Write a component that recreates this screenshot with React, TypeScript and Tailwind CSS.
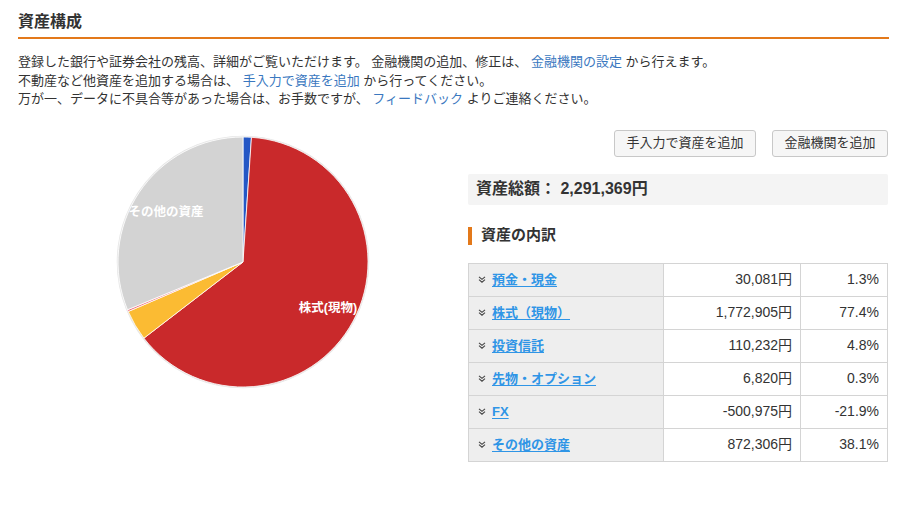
import React from "react";

const FONT = { fontFamily: '"Liberation Sans", "Noto Sans CJK JP", sans-serif' };

const slices = [
  { v: 30081, c: "#2457c5" },
  { v: 1772905, c: "#c9292b" },
  { v: 110232, c: "#fbbb33" },
  { v: 6820, c: "#ef6f7a" },
  { v: 872306, c: "#d3d3d3" },
];

function Pie() {
  const cx = 225;
  const cy = 132;
  const r = 125;
  const total = slices.reduce((s, x) => s + x.v, 0);
  let a = 0;
  const paths = slices.map((s, i) => {
    const start = a;
    const end = a + (s.v / total) * Math.PI * 2;
    a = end;
    const x1 = cx + r * Math.sin(start);
    const y1 = cy - r * Math.cos(start);
    const x2 = cx + r * Math.sin(end);
    const y2 = cy - r * Math.cos(end);
    const large = end - start > Math.PI ? 1 : 0;
    return (
      <path
        key={i}
        d={`M${cx},${cy} L${x1},${y1} A${r},${r} 0 ${large} 1 ${x2},${y2} Z`}
        fill={s.c}
        stroke="#ffffff"
        strokeWidth={0.8}
      />
    );
  });
  return (
    <svg width="450" height="300" viewBox="0 0 450 300">
      <circle cx={cx} cy={cy} r={r + 0.5} fill="none" stroke="#e6e6e6" strokeWidth={1.5} />
      {paths}
      <text x="148" y="86" fill="#ffffff" fontSize="12.5" fontWeight="bold" textAnchor="middle" style={FONT}>
        その他の資産
      </text>
      <text x="310" y="182" fill="#ffffff" fontSize="12.5" fontWeight="bold" textAnchor="middle" style={FONT}>
        株式(現物)
      </text>
    </svg>
  );
}

function Chevron() {
  return (
    <svg width="8" height="7" viewBox="0 0 8 7" className="shrink-0">
      <path d="M1 0.8 L4 3.3 L7 0.8 M1 3.7 L4 6.2 L7 3.7" fill="none" stroke="#444" strokeWidth="1.1" />
    </svg>
  );
}

const rows = [
  ["預金・現金", "30,081円", "1.3%"],
  ["株式（現物）", "1,772,905円", "77.4%"],
  ["投資信託", "110,232円", "4.8%"],
  ["先物・オプション", "6,820円", "0.3%"],
  ["FX", "-500,975円", "-21.9%"],
  ["その他の資産", "872,306円", "38.1%"],
];

export default function App() {
  return (
    <div className="w-[907px] h-[514px] bg-white px-[18px] pt-[11px] text-[#333]" style={FONT}>
      <h2 className="text-[16px] font-bold leading-[22px] pb-[4px] border-b-2 border-[#e3791a]">資産構成</h2>
      <div className="mt-[14px] text-[13px] leading-[18.5px]">
        <p>
          登録した銀行や証券会社の残高、詳細がご覧いただけます。 金融機関の追加、修正は、{" "}
          <span className="text-[#3a78c0]">金融機関の設定</span> から行えます。
        </p>
        <p>
          不動産など他資産を追加する場合は、 <span className="text-[#3a78c0]">手入力で資産を追加</span> から行ってください。
        </p>
        <p>
          万が一、データに不具合等があった場合は、お手数ですが、 <span className="text-[#3a78c0]">フィードバック</span>{" "}
          よりご連絡ください。
        </p>
      </div>
      <div className="mt-[21px] flex">
        <div className="w-[450px] shrink-0">
          <Pie />
        </div>
        <div className="w-[420px]">
          <div className="flex justify-end gap-[16px]">
            <button className="w-[142px] h-[27px] rounded-[3px] border border-[#c8c8c8] bg-[#f6f6f6] text-[13px] text-[#333]">
              手入力で資産を追加
            </button>
            <button className="w-[116px] h-[27px] rounded-[3px] border border-[#c8c8c8] bg-[#f6f6f6] text-[13px] text-[#333]">
              金融機関を追加
            </button>
          </div>
          <div className="mt-[17px] h-[31px] rounded-[2px] bg-[#f4f4f4] flex items-center pl-[8px] text-[16px] font-bold">
            資産総額： 2,291,369円
          </div>
          <div className="mt-[22px] h-[18px] flex items-center">
            <div className="w-[4px] h-[18px] bg-[#e3791a]" />
            <div className="ml-[9px] text-[15px] font-bold">資産の内訳</div>
          </div>
          <table className="mt-[18px] w-[420px] border-collapse border border-[#d4d4d4] text-[14px]">
            <tbody>
              {rows.map((r) => (
                <tr key={r[0]} className="h-[33px]">
                  <td className="w-[195px] bg-[#eeeeee] border border-[#d4d4d4] pl-[9px]">
                    <div className="flex items-center gap-[6px]">
                      <Chevron />
                      <span className="text-[13px] font-bold text-[#2f95e6] underline underline-offset-2">{r[0]}</span>
                    </div>
                  </td>
                  <td className="w-[137px] border border-[#d4d4d4] text-right pr-[8px]">{r[1]}</td>
                  <td className="border border-[#d4d4d4] text-right pr-[8px]">{r[2]}</td>
                </tr>
              ))}
            </tbody>
          </table>
        </div>
      </div>
    </div>
  );
}
